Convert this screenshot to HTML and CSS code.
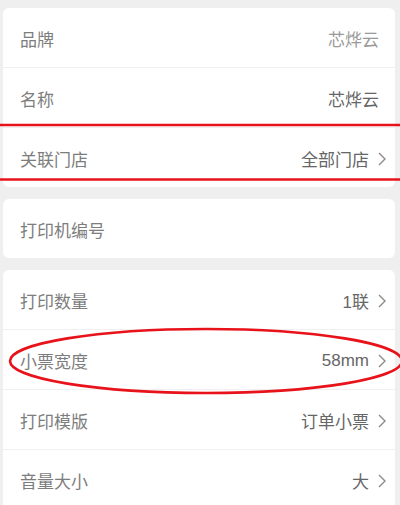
FILE: index.html
```html
<!DOCTYPE html>
<html lang="zh-CN">

<head>
  <meta charset="UTF-8">
  <title>打印机设置</title>
  <link rel="stylesheet" href="styles.css">
</head>

<body>
  <div class="page">
    <!-- 基本信息 -->
    <div class="card">
      <div class="row">
        <span class="label">品牌</span>
        <span class="value light">芯烨云</span>
      </div>
      <div class="row">
        <span class="label">名称</span>
        <span class="value">芯烨云</span>
      </div>
      <div class="row link">
        <span class="label">关联门店</span>
        <span class="value">全部门店</span>
        <svg class="arrow" width="8" height="14" viewBox="0 0 8 14"><polyline points="1,1 7,7 1,13" /></svg>
      </div>
    </div>
    <!-- 编号 -->
    <div class="card">
      <div class="row">
        <span class="label">打印机编号</span>
      </div>
    </div>
    <!-- 打印设置 -->
    <div class="card">
      <div class="row link">
        <span class="label">打印数量</span>
        <span class="value">1联</span>
        <svg class="arrow" width="8" height="14" viewBox="0 0 8 14"><polyline points="1,1 7,7 1,13" /></svg>
      </div>
      <div class="row link">
        <span class="label">小票宽度</span>
        <span class="value">58mm</span>
        <svg class="arrow" width="8" height="14" viewBox="0 0 8 14"><polyline points="1,1 7,7 1,13" /></svg>
      </div>
      <div class="row link">
        <span class="label">打印模版</span>
        <span class="value">订单小票</span>
        <svg class="arrow" width="8" height="14" viewBox="0 0 8 14"><polyline points="1,1 7,7 1,13" /></svg>
      </div>
      <div class="row link">
        <span class="label">音量大小</span>
        <span class="value">大</span>
        <svg class="arrow" width="8" height="14" viewBox="0 0 8 14"><polyline points="1,1 7,7 1,13" /></svg>
      </div>
    </div>
  </div>

  <!-- 红色标注 -->
  <svg class="marks" width="400" height="505" viewBox="0 0 400 505">
    <line x1="0" y1="125" x2="400" y2="125" />
    <line x1="0" y1="179.5" x2="400" y2="179.5" />
    <ellipse cx="206" cy="361" rx="196" ry="32" />
  </svg>
</body>

</html>
```

FILE: styles.css
```css
* {
  margin: 0;
  padding: 0;
}

html,
body {
  height: 100%;
  overflow: hidden;
}

body {
  position: relative;
  background: #efefef;
  font-family: "Liberation Sans", "Noto Sans CJK SC", sans-serif;
  font-size: 17px;
}

.page {
  display: flex;
  flex-direction: column;
  gap: 12px;
  padding: 8px 5px 0 3px;
}

.card {
  background: #fff;
  border-radius: 6px;
}

.row {
  display: flex;
  align-items: center;
  height: 59px;
  padding: 2px 16px 0 17px;
  box-sizing: border-box;
}

.row + .row {
  border-top: 1px solid #f0f0f0;
  height: 60px;
}

.row.link {
  padding-right: 9px;
}

.label {
  flex: 1;
  color: #7d7d7d;
}

.value {
  color: #666;
}

.value.light {
  color: #9a9a9a;
}

.arrow {
  margin-left: 9px;
  fill: none;
  stroke: #8a8a8a;
  stroke-width: 1.4;
}

.marks {
  position: absolute;
  left: 0;
  top: 0;
  pointer-events: none;
  fill: none;
  stroke: #e8131a;
  stroke-width: 2.6;
}
```
